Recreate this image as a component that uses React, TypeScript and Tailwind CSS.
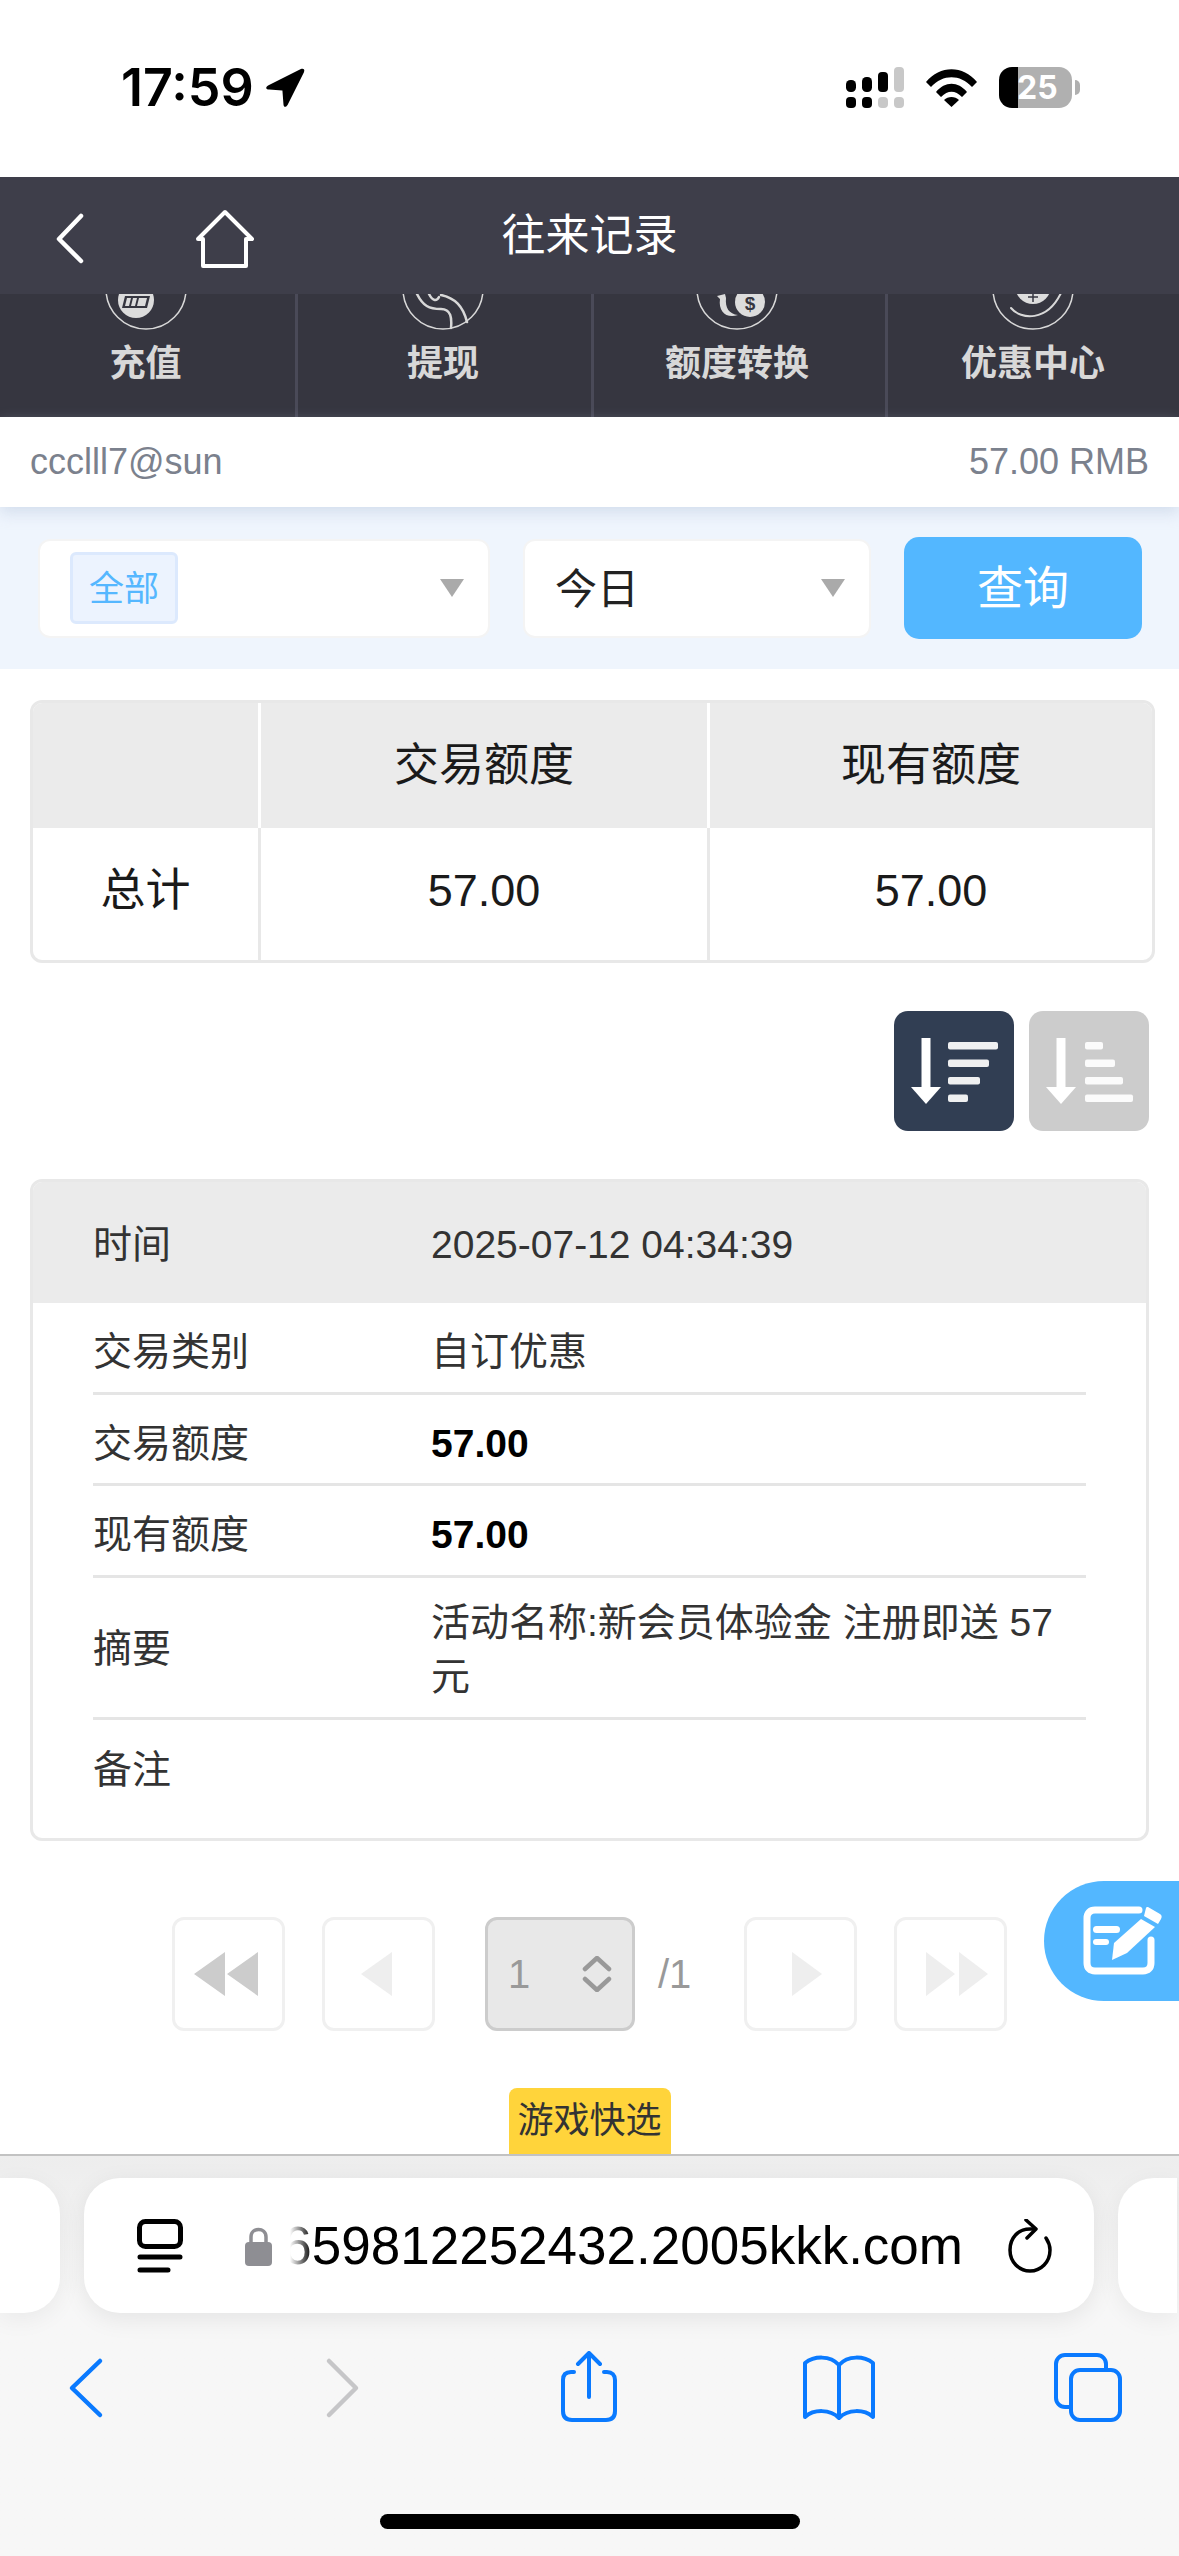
import React from 'react';

const summaryRows = [
  { label: '交易类别', value: '自订优惠', bold: false },
  { label: '交易额度', value: '57.00', bold: true },
  { label: '现有额度', value: '57.00', bold: true },
];

function CircleIcon({ children }: { children: React.ReactNode }) {
  return (
    <svg viewBox="-45 0 90 37" className="w-[90px] h-[37px]" fill="none">
      <circle cx="0" cy="-5" r="40" stroke="#d8d8d8" strokeWidth="1.5" />
      {children}
    </svg>
  );
}

const navItems = [
  {
    label: '充值',
    cell: 'flex flex-col items-center pr-[4px]',
    icon: (
      <>
        <circle cx="-10" cy="6" r="18" fill="#dcdcdc" />
        <path d="M-21 2H4L1 14H-24Z" fill="#363640" />
        <path d="M-19 4H-15L-17 12H-21ZM-13 4H-9L-11 12H-15ZM-7 4H1L-1 12H-9Z" fill="#dcdcdc" />
      </>
    ),
  },
  {
    label: '提现',
    cell: 'flex flex-col items-center border-l-[3px] border-[#4a4a58] pr-[3px]',
    icon: (
      <g stroke="#d8d8d8" strokeWidth="2.5" strokeLinecap="round">
        <path d="M-26 0C-20 12 -14 15 -2 15C8 15 9 24 8 34" />
        <path d="M-2 1C12 4 20 12 24 28" />
        <path d="M-14 0C-10 8 -6 7 -4 3" />
      </g>
    ),
  },
  {
    label: '额度转换',
    cell: 'flex flex-col items-center border-l-[3px] border-[#4a4a58] pr-[5px]',
    icon: (
      <>
        <circle cx="13" cy="8" r="15" fill="#dcdcdc" />
        <path d="M-20 2L-12 0L-11 4C-12 14 -8 20 1 21C-10 25 -19 18 -17 5Z" fill="#dcdcdc" />
        <text x="13" y="16" textAnchor="middle" fontSize="19" fontWeight="700" fill="#363640">$</text>
      </>
    ),
  },
  {
    label: '优惠中心',
    cell: 'flex flex-col items-center border-l-[3px] border-[#4a4a58] pr-[1px]',
    icon: (
      <>
        <path d="M-22 14C-12 26 14 28 28 -1" stroke="#d8d8d8" strokeWidth="2" strokeLinecap="round" />
        <circle cx="0" cy="-8" r="18" fill="#dcdcdc" />
        <path d="M0 0V8M-5 3H5" stroke="#363640" strokeWidth="1.5" />
      </>
    ),
  },
];

function PageButton({ tone, children }: { tone: string; children: React.ReactNode }) {
  return (
    <div className="w-[113px] h-[114px] rounded-[12px] border-[3px] border-[#f0f0f0] bg-white flex items-center justify-center">
      <svg viewBox="0 0 66 44" className="w-[66px] h-[44px] overflow-visible" fill={tone}>
        {children}
      </svg>
    </div>
  );
}

function SelectArrow() {
  return <svg viewBox="0 0 24 18" className="w-[24px] h-[18px]"><path d="M0 0H24L12 18Z" fill="#aaaaaa" /></svg>;
}

function SortIcon({ bars, left }: { bars: number[]; left: number }) {
  return (
    <svg viewBox="0 0 120 120" className="w-[120px] h-[120px]" fill="none">
      <path d="M32 27V80" stroke="#fff" strokeWidth="9" />
      <path d="M17 76H47L32 93Z" fill="#fff" />
      {bars.map((w, i) => (
        <rect key={i} x={left} y={31 + i * 17.5} width={w} height="7.5" rx="2" fill="#fff" fillOpacity="0.92" />
      ))}
    </svg>
  );
}

export default function App() {
  return (
    <div className="w-[1179px] h-[2556px] overflow-hidden bg-white [font-family:'Liberation_Sans','Noto_Sans_CJK_SC',sans-serif]">
      {/* status bar */}
      <div className="h-[177px] flex items-start justify-between pt-[67px] pl-[121px] pr-[98px]">
        <div className="flex items-center gap-[11px] h-[41px]">
          <span className="text-[52px] leading-none font-semibold text-black [font-family:Inter,sans-serif]">17:59</span>
          <svg viewBox="0 0 40 40" className="w-[41px] h-[41px]">
            <path d="M3 18L35 2C38 1 39 3 38 5L22 37C20 40 18 39 18 36L17 23L4 22C1 22 0 20 3 18Z" fill="#000" />
          </svg>
        </div>
        <div className="flex items-center gap-[22px] h-[41px]">
          <svg viewBox="0 0 58 41" className="w-[58px] h-[41px]">
            <rect x="0" y="13" width="10" height="12" rx="4.5" fill="#000" />
            <rect x="16" y="10" width="10" height="15" rx="4.5" fill="#000" />
            <rect x="32" y="5" width="10" height="20" rx="4" fill="#000" />
            <rect x="48" y="0" width="10" height="25" rx="4" fill="#c8c8c8" />
            <rect x="0" y="30" width="10" height="11" rx="4" fill="#000" />
            <rect x="16" y="30" width="10" height="11" rx="4" fill="#000" />
            <rect x="32" y="30" width="10" height="11" rx="4" fill="#c8c8c8" />
            <rect x="48" y="30" width="10" height="11" rx="4" fill="#c8c8c8" />
          </svg>
          <svg viewBox="0 0 51 38" className="w-[51px] h-[38px]">
            <path d="M0 13C14 -4 37 -4 51 13L46 18C34 5 17 5 5 18Z" fill="#000" />
            <path d="M10 23C19 12 32 12 41 23L36 28C29 21 22 21 15 28Z" fill="#000" />
            <path d="M18 31C22 27 29 27 33 31L25.5 38Z" fill="#000" />
          </svg>
          <div className="relative w-[82px] h-[41px] flex">
            <div className="w-[19px] h-[41px] bg-black rounded-l-[13px]" />
            <div className="w-[54px] h-[41px] bg-[#b0b0b0] rounded-r-[13px]" />
            <div className="ml-[3px] mt-[13px] w-[5px] h-[15px] bg-[#b0b0b0] rounded-r-full" />
            <span className="absolute left-[18px] top-0 leading-[41px] text-[32px] font-bold text-white [font-family:Inter,sans-serif]">25</span>
          </div>
        </div>
      </div>

      {/* title bar */}
      <div className="relative h-[117px] bg-[#3e3e4a] flex items-center justify-center">
        <svg viewBox="0 0 250 90" className="absolute left-[30px] top-[13px] w-[250px] h-[90px]" fill="none" stroke="#fff">
          <path d="M51 26L29 49L51 71" strokeWidth="4.5" strokeLinecap="round" strokeLinejoin="round" />
          <path d="M168 49L195 22L222 49H216V76H173V49Z" strokeWidth="4" strokeLinejoin="round" />
        </svg>
        <span className="text-[44px] text-white leading-none">往来记录</span>
      </div>

      {/* quick nav, icons clipped by the title bar */}
      <div className="h-[123px] bg-[#363640] grid grid-cols-[295px_296px_294px_294px]">
        {navItems.map((item) => (
          <div key={item.label} className={item.cell}>
            <CircleIcon>{item.icon}</CircleIcon>
            <span className="mt-[15px] text-[36px] leading-[36px] font-bold text-[#d8d8d8]">{item.label}</span>
          </div>
        ))}
      </div>

      {/* account row */}
      <div className="relative h-[90px] bg-white flex items-center justify-between px-[30px] shadow-[0_6px_14px_rgba(180,195,220,0.45)] text-[36px] text-[#7b818d]">
        <span>ccclll7@sun</span>
        <span>57.00 RMB</span>
      </div>

      {/* filters */}
      <div className="h-[162px] bg-[#eff5fd] flex items-center pl-[38px]">
        <div className="w-[452px] h-[99px] rounded-[12px] bg-white border-2 border-[#f4f4f4] flex items-center justify-between pl-[30px] pr-[24px]">
          <span className="w-[108px] h-[72px] rounded-[6px] bg-[#ecf3fe] border-[3px] border-[#dce9fd] text-[35px] text-[#55b7ff] flex items-center justify-center pt-[2px]">全部</span>
          <SelectArrow />
        </div>
        <div className="ml-[33px] w-[348px] h-[99px] rounded-[12px] bg-white border-2 border-[#f4f4f4] flex items-center justify-between pl-[30px] pr-[24px]">
          <span className="text-[42px] text-[#222] pt-[2px]">今日</span>
          <SelectArrow />
        </div>
        <button className="ml-[33px] w-[238px] h-[102px] rounded-[15px] bg-[#53b7ff] text-white text-[46px]">查询</button>
      </div>

      {/* totals */}
      <div className="mt-[31px] ml-[30px] w-[1125px] h-[263px] rounded-[12px] border-[3px] border-[#e8e8e8] overflow-hidden grid grid-cols-[228px_449px_1fr] grid-rows-[125px_1fr] text-[45px] text-[#1a1a1a] text-center">
        <div className="bg-[#ebebeb] border-r-[3px] border-white" />
        <div className="bg-[#ebebeb] border-r-[3px] border-white flex items-center justify-center">交易额度</div>
        <div className="bg-[#ebebeb] flex items-center justify-center">现有额度</div>
        <div className="border-r-[3px] border-[#e8e8e8] flex items-center justify-center pb-[6px]">总计</div>
        <div className="border-r-[3px] border-[#e8e8e8] flex items-center justify-center pb-[6px]">57.00</div>
        <div className="flex items-center justify-center pb-[6px]">57.00</div>
      </div>

      {/* sort buttons */}
      <div className="mt-[48px] pr-[30px] flex justify-end gap-[15px]">
        <div className="w-[120px] h-[120px] rounded-[14px] bg-[#313e53]"><SortIcon bars={[50, 41, 32, 20]} left={54} /></div>
        <div className="w-[120px] h-[120px] rounded-[14px] bg-[#cccccc]"><SortIcon bars={[18, 30, 38, 48]} left={56} /></div>
      </div>

      {/* record card */}
      <div className="mt-[48px] ml-[30px] w-[1119px] h-[662px] rounded-[12px] border-[3px] border-[#e8e8e8] overflow-hidden text-[39px] text-[#333]">
        <div className="h-[121px] bg-[#ebebeb] flex items-center pl-[60px] pt-[6px]">
          <span className="w-[338px]">时间</span>
          <span>2025-07-12 04:34:39</span>
        </div>
        <div className="mx-[60px]">
          {summaryRows.map((row) => (
            <div key={row.label} className="h-[91.5px] border-b-[3px] border-[#e5e5e5] flex items-center pt-[10px]">
              <span className="w-[338px]">{row.label}</span>
              <span className={row.bold ? 'font-bold text-black' : ''}>{row.value}</span>
            </div>
          ))}
          <div className="h-[142px] border-b-[3px] border-[#e5e5e5] flex items-center pt-[5px]">
            <span className="w-[338px] shrink-0">摘要</span>
            <span className="leading-[54px]">活动名称:新会员体验金 注册即送 57<br />元</span>
          </div>
          <div className="h-[101px] flex items-center">
            <span>备注</span>
          </div>
        </div>
      </div>

      {/* pagination */}
      <div className="relative mt-[76px] pl-[172px] flex items-center h-[114px]">
        <PageButton tone="#cccccc"><path d="M-2 22L29 0V44ZM31 22L62 0V44Z" /></PageButton>
        <div className="ml-[37px]"><PageButton tone="#eeeeee"><path d="M15 22L46 0V44Z" /></PageButton></div>
        <div className="ml-[50px] w-[150px] h-[114px] rounded-[12px] border-[3px] border-[#cccccc] bg-[#e8e8e8] flex items-center justify-between pl-[20px] pr-[20px] text-[40px] text-[#999]">
          <span>1</span>
          <svg viewBox="0 0 30 36" className="w-[30px] h-[36px]" fill="none" stroke="#999" strokeWidth="4.5" strokeLinecap="round" strokeLinejoin="round">
            <path d="M3 13L15 2L27 13M3 23L15 34L27 23" />
          </svg>
        </div>
        <span className="ml-[23px] w-[86px] text-[40px] text-[#999]">/1</span>
        <PageButton tone="#eeeeee"><path d="M24 0L54 22L24 44Z" /></PageButton>
        <div className="ml-[37px]"><PageButton tone="#eeeeee"><path d="M8 0L37 22L8 44ZM41 0L70 22L41 44Z" /></PageButton></div>
        <div className="absolute right-0 -top-[36px] w-[135px] h-[120px] rounded-l-[60px] bg-[#53b7ff] flex items-center pl-[39px]">
          <svg viewBox="0 0 80 70" className="w-[80px] h-[70px]" fill="none">
            <path d="M56 4H12C7 4 4 7 4 12V57C4 62 7 65 12 65H60C65 65 68 62 68 57V34" stroke="#fff" strokeWidth="7" strokeLinecap="round" />
            <rect x="10" y="20" width="27" height="7" rx="3.5" fill="#fff" />
            <rect x="10" y="33" width="16" height="6" rx="3" fill="#fff" />
            <path d="M65 1L77 8C79 9 79 11 78 13L75 18L61 10L63 2C63 1 64 1 65 1Z" fill="#fff" />
            <path d="M58 13L72 21L44 47L29 54L31 37Z" fill="#fff" />
          </svg>
        </div>
      </div>

      {/* quick pick tab */}
      <div className="mt-[57px] flex justify-center">
        <div className="w-[162px] h-[66px] rounded-t-[8px] bg-[#ffd43b] text-[36px] text-[#333] flex items-center justify-center">游戏快选</div>
      </div>

      {/* safari toolbar */}
      <div className="h-[402px] border-t-2 border-[#c2c2c2] bg-gradient-to-b from-[#ededed] to-[#f7f7f7] to-[35%]">
        <div className="mt-[22px] h-[135px] flex gap-[24px]">
          <div className="w-[60px] rounded-r-[36px] bg-white shadow-[0_6px_24px_rgba(0,0,0,0.06)]" />
          <div className="w-[1010px] rounded-[36px] bg-white shadow-[0_6px_24px_rgba(0,0,0,0.08)] flex items-center pl-[53px]">
            <svg viewBox="0 0 46 54" className="w-[46px] h-[54px]" fill="none" stroke="#000" strokeWidth="5" strokeLinecap="round">
              <rect x="2.5" y="2.5" width="41" height="25" rx="6" />
              <path d="M3 38H43M3 51H31" />
            </svg>
            <svg viewBox="0 0 27 40" className="ml-[62px] w-[27px] h-[40px]">
              <path d="M6 18V11C6 1 21 1 21 11V18" fill="none" stroke="#8e8e93" strokeWidth="3.5" />
              <rect x="0" y="16" width="27" height="24" rx="4" fill="#8e8e93" />
            </svg>
            <div className="relative ml-[18px] w-[673px] overflow-hidden flex justify-end">
              <span className="text-[53px] leading-[60px] text-black whitespace-nowrap">659812252432.2005kkk.com</span>
              <div className="absolute left-0 top-0 w-[22px] h-full bg-gradient-to-r from-white to-transparent" />
            </div>
            <svg viewBox="0 0 44 54" className="ml-[45px] w-[44px] h-[54px]" fill="none" stroke="#000" strokeWidth="3.5" strokeLinecap="round" strokeLinejoin="round">
              <path d="M27 10H22C10 10 2 19 2 31C2 43 11 52 22 52C33 52 42 43 42 31C42 26 40 22 38 19" />
              <path d="M18 1L28 10L19 19" />
            </svg>
          </div>
          <div className="w-[59px] rounded-l-[36px] bg-white shadow-[0_6px_24px_rgba(0,0,0,0.06)]" />
        </div>

        <div className="relative mt-[38px] h-[71px]">
          <svg viewBox="0 0 1179 71" className="w-[1179px] h-[71px]" fill="none" strokeLinecap="round" strokeLinejoin="round">
            <path d="M100 10L72 37L100 64" stroke="#0a7aff" strokeWidth="4.5" />
            <path d="M329 10L356 37L329 64" stroke="#c6c6c8" strokeWidth="4.5" />
            <g stroke="#0a7aff" strokeWidth="4">
              <path d="M574 21H571C565 21 563 24 563 29V60C563 66 566 69 572 69H606C612 69 615 66 615 60V29C615 24 612 21 607 21H604" />
              <path d="M589 46V2M578 13L589 2L600 13" />
              <path d="M839 14C830 4 814 5 805 12V66C814 58 830 58 839 67C848 58 864 58 873 66V12C864 5 848 4 839 14ZM839 14V66" />
              <rect x="1056" y="4" width="50" height="52" rx="9" />
              <rect x="1071" y="19" width="49" height="50" rx="9" fill="#f7f7f7" />
            </g>
          </svg>
        </div>
        <div className="mt-[92px] mx-auto w-[420px] h-[15px] rounded-full bg-black" />
      </div>
    </div>
  );
}
